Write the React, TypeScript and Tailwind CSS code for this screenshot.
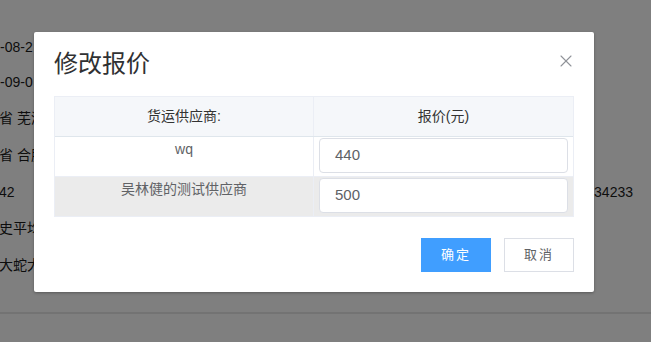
import { X } from "lucide-react";

const bgRows = [
  { h: "h-[35px]", left: "-08-2", right: "" },
  { h: "h-[35px]", left: "-09-0", right: "" },
  { h: "h-[37px]", left: "省 芜湖市", right: "" },
  { h: "h-[37px]", left: "省 合肥市", right: "" },
  { h: "h-[36px]", left: "42", right: "1534234233" },
  { h: "h-[36px]", left: "史平均价", right: "" },
  { h: "h-[38px]", left: "大蛇大", right: "" },
];

const quotes = [
  { name: "wq", price: "440", bg: "bg-white" },
  { name: "吴林健的测试供应商", price: "500", bg: "bg-[#ebebeb]" },
];

export default function App() {
  return (
    <div
      className="relative w-[651px] h-[342px] overflow-hidden bg-white"
      style={{ fontFamily: '"Liberation Sans", "Noto Sans CJK SC", sans-serif' }}
    >
      {/* page behind the dialog */}
      <div className="flex flex-col pt-[30px] h-[314px] border-b-2 border-[#e6e6e6] text-[14px] text-[#1a1a1a]">
        {bgRows.map((r, i) => (
          <div key={i} className={`${r.h} flex items-center justify-between pr-[18px]`}>
            <span className={`${i < 2 ? "ml-0" : "-ml-[1px]"} whitespace-nowrap`}>{r.left}</span>
            <span>{r.right}</span>
          </div>
        ))}
      </div>

      {/* mask */}
      <div className="absolute inset-0 bg-black/50" />

      {/* dialog */}
      <div className="absolute left-[34px] top-[32px] w-[560px] bg-white rounded-[2px] shadow-[0_1px_3px_rgba(0,0,0,0.3)]">
        <div className="relative px-5 pt-5 pb-[10px]">
          <h2 className="text-[24px] leading-[24px] text-[#303133]">修改报价</h2>
          <button className="absolute right-[18px] top-[19px] text-[#909399]">
            <X size={20} strokeWidth={1.3} />
          </button>
        </div>

        <div className="px-5 pt-[10px]">
          <div className="border border-[#ebeef5] border-b-0 text-[14px]">
            <div className="grid grid-cols-2 h-[40px] bg-[#f5f7fa] border-b border-[#dfe6ec] text-[#333]">
              <div className="flex items-center justify-center border-r border-[#ebeef5]">货运供应商:</div>
              <div className="flex items-center justify-center">报价(元)</div>
            </div>
            {quotes.map((q) => (
              <div key={q.name} className={`grid grid-cols-2 border-b border-[#ebeef5] ${q.bg}`}>
                <div className="text-center text-[#606266] leading-[18px] pt-[3px] border-r border-[#ebeef5]">
                  {q.name}
                </div>
                <div className="pl-[5px] pr-[5px] pt-[1px] pb-[3px]">
                  <div className="h-[35px] flex items-center pl-[15px] bg-white border border-[#dcdfe6] rounded-[4px] text-[15px] text-[#606266]">
                    {q.price}
                  </div>
                </div>
              </div>
            ))}
          </div>
        </div>

        <div className="flex justify-end gap-[13px] px-5 pt-[21px] pb-5 text-[13px]">
          <button className="w-[70px] h-[34px] bg-[#409eff] text-white tracking-[2px]">确定</button>
          <button className="w-[70px] h-[34px] bg-white border border-[#dcdfe6] text-[#606266] tracking-[2px]">
            取消
          </button>
        </div>
      </div>
    </div>
  );
}
